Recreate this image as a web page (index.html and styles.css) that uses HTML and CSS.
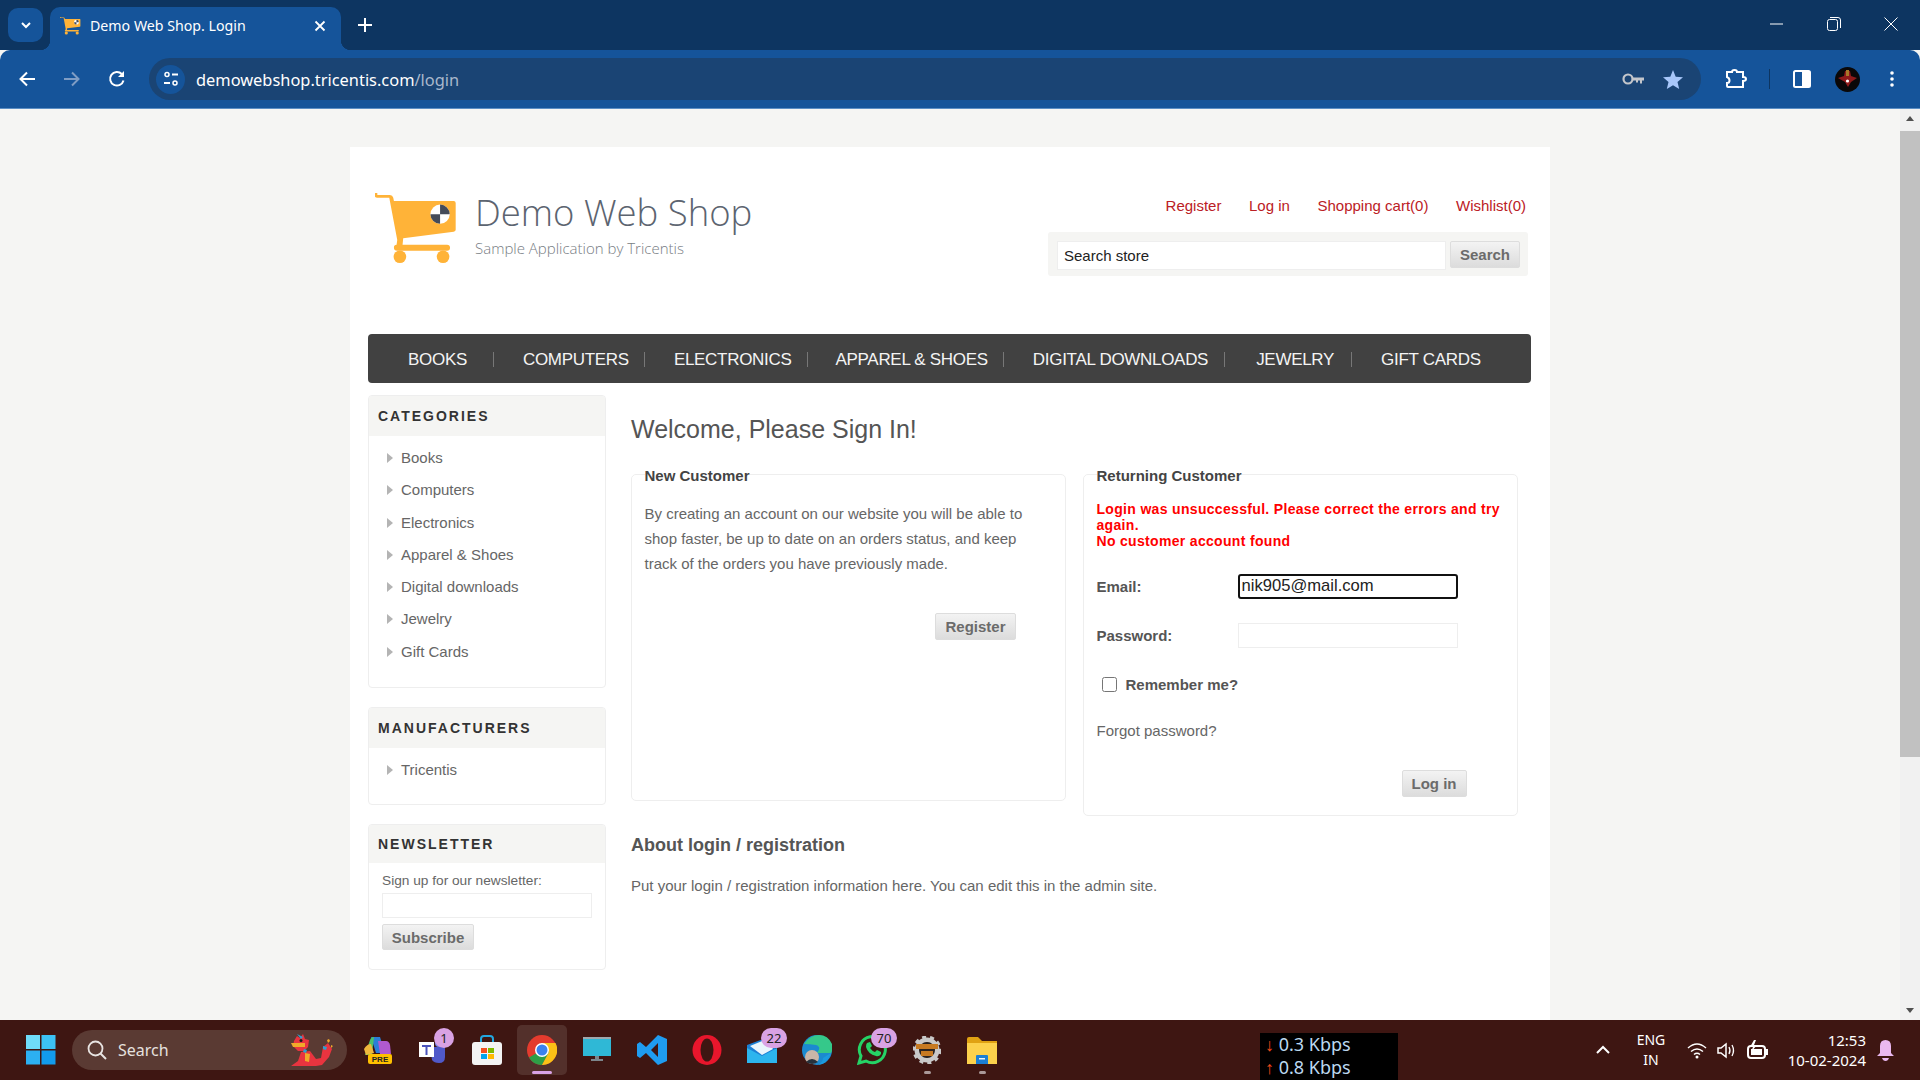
FILE: index.html
```html
<!DOCTYPE html>
<html lang="en">
<head>
    <meta charset="UTF-8">
    <title>Demo Web Shop. Login</title>
    <link rel="stylesheet" href="styles.css">
</head>
<body>
    <!-- Browser: tabs -->
    <div class="tabstrip">
        <div class="tab-search">
            <svg width="14" height="14" viewBox="0 0 14 14"><path d="M3 5l4 4 4-4" fill="none" stroke="#fff" stroke-width="2"/></svg>
        </div>
        <div class="tab">
            <svg width="21" height="18" viewBox="105 155 250 215"><path d="M112 160h38q8 0 10 8l2 10h180q6 0 6 6v81q0 5-6 6l-152 19-2 20h134a9 9 0 0 1 0 18H172q-10 0-10-10 0-8 8-8l2-14-24-128h-36a9 9 0 0 1 0-18z" fill="#ffb338"/><circle cx="180" cy="346" r="19" fill="#ffb338"/><circle cx="310" cy="346" r="19" fill="#ffb338"/><circle cx="301" cy="218" r="29" fill="#fff"/><path d="M301 189a29 29 0 0 1 29 29h-29zM301 247a29 29 0 0 1-29-29h29z" fill="#444b59"/></svg>
            <span class="tab-title">Demo Web Shop. Login</span>
            <svg class="tab-close" width="12" height="12" viewBox="0 0 12 12"><path d="M1.5 1.5l9 9M10.500 1.500l-9 9" stroke="#fff" stroke-width="1.800"/></svg>
        </div>
        <svg class="tab-new" width="14" height="14" viewBox="0 0 14 14"><path d="M7 0v14M0 7h14" stroke="#fff" stroke-width="2"/></svg>
        <div class="window-buttons">
            <svg width="14" height="14" viewBox="0 0 14 14"><path d="M0 7h13" stroke="#fff"/></svg>
            <svg width="14" height="14" viewBox="0 0 14 14"><rect x=".5" y="2.500" width="10" height="11" rx="2" fill="none" stroke="#fff"/><path d="M3 .5h8q2.500 0 2.500 2.500v8" fill="none" stroke="#fff"/></svg>
            <svg width="14" height="14" viewBox="0 0 14 14"><path d="M.5.5l13 13M13.500.5l-13 13" stroke="#fff"/></svg>
        </div>
    </div>

    <!-- Browser: toolbar -->
    <div class="toolbar">
        <svg class="nav-icon" width="18" height="18" viewBox="0 0 18 18"><path d="M17 9H3M9 2.500L2.500 9 9 15.500" fill="none" stroke="#fff" stroke-width="2"/></svg>
        <svg class="nav-icon" width="18" height="18" viewBox="0 0 18 18"><path d="M1 9h14M9 2.500L15.500 9 9 15.500" fill="none" stroke="#7f9dc4" stroke-width="2"/></svg>
        <svg class="nav-icon" width="18" height="18" viewBox="0 0 18 18"><path d="M15.500 10.500A6.800 6.800 0 1 1 13.800 4" fill="none" stroke="#fff" stroke-width="2"/><path d="M16 1v6h-6z" fill="#fff"/></svg>
        <div class="omnibox">
            <span class="site-icon">
                <svg width="16" height="16" viewBox="0 0 16 16"><circle cx="4" cy="3.500" r="2" fill="none" stroke="#fff" stroke-width="1.500"/><path d="M9 3.500h6M1 12h6" stroke="#fff" stroke-width="2"/><circle cx="12" cy="12" r="2" fill="none" stroke="#fff" stroke-width="1.500"/></svg>
            </span>
            <span class="url">demowebshop.tricentis.com<span class="url-path">/login</span></span>
            <svg class="omni-key" width="23" height="14" viewBox="0 0 23 14"><circle cx="6" cy="7" r="4.500" fill="none" stroke="#c3c6cb" stroke-width="2.200"/><path d="M11 5.500h11v3h-2v3h-2v-3h-2v2h-2v-2h-3z" fill="#c3c6cb"/></svg>
            <svg class="omni-star" width="20" height="19" viewBox="0 0 20 19"><path d="M10 0l2.700 6.700 7.300.6-5.500 4.700 1.700 7L10 15.200 3.800 19l1.700-7L0 7.300l7.300-.6z" fill="#a8c7fa"/></svg>
        </div>
        <svg class="tool-icon tool-puzzle" width="22" height="20" viewBox="0 0 22 20"><path d="M2 3h5q0-2 2.500-2T12 3h6v5q3 0 3 2t-3 2v6H3q-1 0-1-1v-3q2.500 0 2.500-2.500T2 8z" fill="none" stroke="#fff" stroke-width="2"/></svg>
        <span class="tool-sep"></span>
        <svg class="tool-icon tool-panel" width="18" height="18" viewBox="0 0 18 18"><rect x="1" y="1" width="16" height="16" rx="1.500" fill="#15549a" stroke="#fff" stroke-width="2"/><rect x="9" y="1" width="8" height="16" fill="#fff"/></svg>
        <svg class="tool-avatar" width="25" height="25" viewBox="0 0 25 25"><circle cx="12.500" cy="12.500" r="12.500" fill="#0a0808"/><path d="M3 11l6-2 1-5h5l1 5 6 2-6 4-3 5-3-5z" fill="#8f1a1a"/><rect x="11" y="3" width="3" height="6" fill="#a8782a"/><circle cx="12.500" cy="14" r="1.600" fill="#fff"/></svg>
        <svg class="tool-dots" width="4" height="16" viewBox="0 0 4 16"><circle cx="2" cy="2" r="1.800" fill="#fff"/><circle cx="2" cy="8" r="1.800" fill="#fff"/><circle cx="2" cy="14" r="1.800" fill="#fff"/></svg>
    </div>

    <!-- Page -->
    <div class="viewport">
        <div class="page-scroll">
            <div class="master-wrapper">
                <header class="shop-header">
                    <a class="logo" href="#">
                        <svg width="83" height="72" viewBox="105 155 250 215"><path d="M112 160h38q8 0 10 8l2 10h180q6 0 6 6v81q0 5-6 6l-152 19-2 20h134a9 9 0 0 1 0 18H172q-10 0-10-10 0-8 8-8l2-14-24-128h-36a9 9 0 0 1 0-18z" fill="#ffb338"/><circle cx="180" cy="346" r="19" fill="#ffb338"/><circle cx="310" cy="346" r="19" fill="#ffb338"/><circle cx="301" cy="218" r="29" fill="#fff"/><path d="M301 189a29 29 0 0 1 29 29h-29zM301 247a29 29 0 0 1-29-29h29z" fill="#444b59"/></svg>
                        <span class="logo-text">
                            <span class="logo-name">Demo Web Shop</span>
                            <span class="logo-sub">Sample Application by Tricentis</span>
                        </span>
                    </a>
                    <div class="header-right">
                        <ul class="header-links">
                            <li><a href="#">Register</a></li>
                            <li><a href="#">Log in</a></li>
                            <li><a href="#">Shopping cart(0)</a></li>
                            <li><a href="#">Wishlist(0)</a></li>
                        </ul>
                        <form class="search-box">
                            <input class="search-input" type="text" value="Search store">
                            <button class="btn search-btn" type="button">Search</button>
                        </form>
                    </div>
                </header>

                <ul class="top-menu">
                    <li><a href="#">BOOKS</a></li>
                    <li><a href="#">COMPUTERS</a></li>
                    <li><a href="#">ELECTRONICS</a></li>
                    <li><a href="#">APPAREL &amp; SHOES</a></li>
                    <li><a href="#">DIGITAL DOWNLOADS</a></li>
                    <li><a href="#">JEWELRY</a></li>
                    <li><a href="#">GIFT CARDS</a></li>
                </ul>

                <div class="columns">
                    <aside class="side">
                        <div class="block">
                            <div class="block-title">CATEGORIES</div>
                            <ul class="block-list block-list-long">
                                <li><a href="#">Books</a></li>
                                <li><a href="#">Computers</a></li>
                                <li><a href="#">Electronics</a></li>
                                <li><a href="#">Apparel &amp; Shoes</a></li>
                                <li><a href="#">Digital downloads</a></li>
                                <li><a href="#">Jewelry</a></li>
                                <li><a href="#">Gift Cards</a></li>
                            </ul>
                        </div>
                        <div class="block">
                            <div class="block-title">MANUFACTURERS</div>
                            <ul class="block-list">
                                <li><a href="#">Tricentis</a></li>
                            </ul>
                        </div>
                        <div class="block">
                            <div class="block-title block-title-short">NEWSLETTER</div>
                            <div class="newsletter">
                                <label class="newsletter-label" for="news-email">Sign up for our newsletter:</label>
                                <input class="text-input newsletter-input" id="news-email" type="text">
                                <button class="btn subscribe-btn" type="button">Subscribe</button>
                            </div>
                        </div>
                    </aside>

                    <main class="content">
                        <h1 class="page-title">Welcome, Please Sign In!</h1>
                        <div class="customer-boxes">
                            <fieldset class="box box-new">
                                <legend>New Customer</legend>
                                <p class="box-text">By creating an account on our website you will be able to shop faster, be up to date on an orders status, and keep track of the orders you have previously made.</p>
                                <div class="box-buttons box-buttons-new">
                                    <button class="btn" type="button">Register</button>
                                </div>
                            </fieldset>
                            <fieldset class="box box-returning">
                                <legend>Returning Customer</legend>
                                <div class="error-text">
                                    Login was unsuccessful. Please correct the errors and try again.<br>
                                    No customer account found
                                </div>
                                <div class="form-row form-row-email">
                                    <label for="email">Email:</label>
                                    <input class="text-input email-input" id="email" type="text" value="nik905@mail.com">
                                </div>
                                <div class="form-row form-row-password">
                                    <label for="password">Password:</label>
                                    <input class="text-input" id="password" type="password">
                                </div>
                                <div class="remember-row">
                                    <span class="checkbox"></span>
                                    <span class="remember-label">Remember me?</span>
                                </div>
                                <a class="forgot" href="#">Forgot password?</a>
                                <div class="box-buttons box-buttons-login">
                                    <button class="btn" type="button">Log in</button>
                                </div>
                            </fieldset>
                        </div>
                        <h2 class="about-title">About login / registration</h2>
                        <p class="about-text">Put your login / registration information here. You can edit this in the admin site.</p>
                    </main>
                </div>
            </div>
        </div>
        <div class="scrollbar">
            <svg width="20" height="20" viewBox="0 0 20 20"><path d="M6 12l4-5 4 5z" fill="#505050"/></svg>
            <div class="scroll-track"><div class="scroll-thumb"></div></div>
            <svg width="20" height="20" viewBox="0 0 20 20"><path d="M6 8l4 5 4-5z" fill="#505050"/></svg>
        </div>
    </div>

    <!-- Windows taskbar -->
    <div class="taskbar">
        <div class="win-start">
            <svg width="30" height="30" viewBox="0 0 30 30"><rect width="14" height="14" fill="#6fdcf9"/><rect x="15.500" width="14" height="14" fill="#3cc2f5"/><rect y="15.500" width="14" height="14" fill="#2cb0f2"/><rect x="15.500" y="15.500" width="14" height="14" fill="#129bec"/></svg>
        </div>
        <div class="win-search">
            <svg width="20" height="20" viewBox="0 0 20 20"><circle cx="8.500" cy="8.500" r="7" fill="none" stroke="#e8e4e2" stroke-width="1.800"/><path d="M13.500 13.500l5.500 5.500" stroke="#e8e4e2" stroke-width="2"/></svg>
            <span class="win-search-text">Search</span>
            <svg class="dragon" width="44" height="34" viewBox="0 0 44 34"><path d="M1 33l7-5 3-9 9-1 6 8 5-1 2-11 5-4 4 6-3 8-7 8-6 1H12z" fill="#e8343f"/><path d="M4 8l3-5 3 2 3-4 2 5 4 1-1 7-4 4H8L3 13z" fill="#e8343f"/><path d="M1 10h14v4H3zM15 20l5 1-1 8-4-1zM37 7l2-1 1 2-2 2zM41 12l2 1-2 2z" fill="#f0a92a"/><circle cx="11" cy="7.500" r="1.500" fill="#1b1b1b"/><path d="M7 1l6 3-2 2zM33 13l4 1-1 3-3-1zM14 16l3 1-1 3-3-1z" fill="#2f9fd0"/></svg>
        </div>

        <div class="task-icon">
            <svg width="30" height="30" viewBox="0 0 30 30"><path d="M9 2h9l5 16h-9z" fill="#2a7fd6"/><path d="M3 20L8 5q1-3 4-3l-2 18z" fill="#4cc06a"/><path d="M16 6h8q3 0 4 4l1 9H18z" fill="#b05ad0"/><path d="M2 14q3-5 7-5l3 9-8 2z" fill="#f0b83c"/><rect x="6" y="19" width="24" height="10" rx="2" fill="#ffc000"/><text class="pre-label" x="18" y="27" text-anchor="middle">PRE</text></svg>
        </div>
        <div class="task-icon">
            <svg width="30" height="30" viewBox="0 0 30 30"><circle cx="22" cy="8" r="4" fill="#7b83eb"/><path d="M13 12h15v10q0 6-6 6-5 0-7-3z" fill="#5059c9"/><rect x="2" y="7" width="15" height="15" fill="#fff"/><path d="M5 10h9v2h-3.500v8h-2v-8H5z" fill="#4b53bc"/></svg>
            <span class="badge">1</span>
        </div>
        <div class="task-icon">
            <svg width="30" height="30" viewBox="0 0 30 30"><path d="M9 7V4q0-3 3-3h6q3 0 3 3v3" fill="none" stroke="#22a7e0" stroke-width="2"/><rect x="0" y="7" width="30" height="23" rx="3" fill="#f3f3f3"/><rect x="9" y="13" width="6" height="5" fill="#f25022"/><rect x="16" y="13" width="6" height="5" fill="#7fba00"/><rect x="9" y="19" width="6" height="5" fill="#00a4ef"/><rect x="16" y="19" width="6" height="5" fill="#ffb900"/></svg>
        </div>
        <div class="task-icon task-icon-active">
            <svg width="30" height="30" viewBox="0 0 30 30"><circle cx="15" cy="15" r="15" fill="#e33b2e"/><path d="M15 15l-13 7.500A15 15 0 0 0 15 30l7.500-13z" fill="#2e9e47"/><path d="M15 8h13.500A15 15 0 0 1 15 30l7-13z" fill="#fbc116"/><circle cx="15" cy="15" r="7" fill="#fff"/><circle cx="15" cy="15" r="5.500" fill="#3b82ee"/></svg>
            <span class="task-mark task-mark-active"></span>
        </div>
        <div class="task-icon">
            <svg width="28" height="26" viewBox="0 0 28 26"><rect width="28" height="19" fill="#2fb8d6"/><rect width="28" height="2" fill="#9fa8ad"/><path d="M12 19h4v3h-4zM8 22h12v2H8z" fill="#7d868c"/></svg>
        </div>
        <div class="task-icon">
            <svg width="30" height="30" viewBox="0 0 30 30"><path d="M21 0l9 4v22l-9 4-12-12-6 5-3-2V9l3-2 6 5zm0 8l-7 7 7 7z" fill="#1f9cf0"/></svg>
        </div>
        <div class="task-icon">
            <svg width="30" height="30" viewBox="0 0 30 30"><ellipse cx="15" cy="15" rx="14.500" ry="15" fill="#e8162c"/><ellipse cx="15" cy="15" rx="6.500" ry="11.500" fill="#3e1612"/></svg>
        </div>
        <div class="task-icon">
            <svg width="30" height="26" viewBox="0 0 30 26"><path d="M0 8L22 0v8l8 4v14H0z" fill="#1b7fd4"/><path d="M0 11l15 8 15-8v15H0z" fill="#2cb5ee"/><path d="M3 9l17-7 6 10-11 6z" fill="#e9f5fc"/></svg>
            <span class="badge badge-wide">22</span>
        </div>
        <div class="task-icon">
            <svg width="30" height="30" viewBox="0 0 30 30"><circle cx="15" cy="15" r="15" fill="#1b8ad0"/><path d="M2 9Q8 0 17 0q9 0 13 9 1 6-1 9H15q5-6-1-8-6-1-12-1z" fill="#35c88a"/><path d="M29 18q-3 11-13 12 5-3 5-7z" fill="#1b9adf"/><circle cx="10" cy="22" r="7" fill="#c9b6a8"/><path d="M4 27q6-6 12 0-6 4-12 0z" fill="#26323d"/></svg>
        </div>
        <div class="task-icon">
            <svg width="30" height="30" viewBox="0 0 30 30"><path d="M2 28l2-7A13 13 0 1 1 9 26z" fill="none" stroke="#25d366" stroke-width="3"/><path d="M10 8l3-1 2 4-2 2q2 3 5 4l2-2 4 2v2q-2 3-5 2-8-2-10-9 0-3 1-4z" fill="#25d366"/></svg>
            <span class="badge badge-wide">70</span>
        </div>
        <div class="task-icon">
            <svg width="28" height="28" viewBox="0 0 28 28"><circle cx="14" cy="14" r="10" fill="none" stroke="#c9c9c9" stroke-width="5"/><circle cx="14" cy="14" r="13" fill="none" stroke="#c9c9c9" stroke-width="3" stroke-dasharray="4 4"/><circle cx="14" cy="14" r="8" fill="#2a2320"/><rect x="3" y="8" width="22" height="5" fill="#c77a22"/><rect x="8" y="15" width="12" height="5" fill="#c77a22"/></svg>
            <span class="task-mark"></span>
        </div>
        <div class="task-icon">
            <svg width="30" height="27" viewBox="0 0 30 27"><path d="M0 2q0-2 2-2h9l4 4h15v6H0z" fill="#e0a213"/><rect y="6" width="30" height="21" fill="#fcd14c"/><path d="M9 19q0-1 1-1h10q1 0 1 1v8H9z" fill="#1b7fd4"/><rect x="12" y="21" width="6" height="1.500" fill="#e8f2fb"/></svg>
            <span class="task-mark"></span>
        </div>

        <div class="net-meter">
            <div class="net-row"><span class="net-arrow">↓</span> 0.3 Kbps</div>
            <div class="net-row"><span class="net-arrow">↑</span> 0.8 Kbps</div>
        </div>

        <div class="tray">
            <svg class="tray-chevron" width="14" height="10" viewBox="0 0 14 10"><path d="M1 8l6-6 6 6" fill="none" stroke="#fff" stroke-width="2"/></svg>
            <div class="tray-lang">ENG<br>IN</div>
            <svg class="tray-wifi" width="20" height="17" viewBox="0 0 20 17"><path d="M1 6q9-8 18 0M4 9.500q6-5 12 0M7 12.500q3-2.500 6 0" fill="none" stroke="#fff" stroke-width="1.500"/><circle cx="10" cy="15" r="1.500" fill="#fff"/></svg>
            <svg class="tray-sound" width="20" height="17" viewBox="0 0 20 17"><path d="M1 6h3l5-4v13l-5-4H1z" fill="none" stroke="#fff" stroke-width="1.500"/><path d="M12 5q2 3.500 0 7M15 3q3 5.500 0 11" fill="none" stroke="#fff" stroke-width="1.300"/></svg>
            <svg class="tray-battery" width="22" height="20" viewBox="0 0 22 20"><rect x="1" y="6" width="17" height="12" rx="3" fill="none" stroke="#fff" stroke-width="2"/><rect x="19" y="9" width="2" height="6" fill="#fff"/><path d="M7 0L3 7h3l-2 5 6-7H7l2-5z" fill="#fff"/><rect x="4" y="9" width="11" height="6" fill="#fff"/></svg>
            <div class="tray-clock">12:53<br>10-02-2024</div>
            <svg class="tray-bell" width="17" height="21" viewBox="0 0 17 21"><path d="M8.500 0q5.500 0 5.500 6v7l3 3H0l3-3V6q0-6 5.500-6z" fill="#eab8f0"/><path d="M5 18h7q-1 3-3.500 3T5 18z" fill="#eab8f0"/></svg>
        </div>
    </div>
</body>
</html>
```

FILE: styles.css
```css
/* General */
* {
    box-sizing: border-box;
}

html, body {
    height: 100%;
}

body {
    margin: 0;
    height: 1080px;
    display: flex;
    flex-direction: column;
    overflow: hidden;
    font-family: "Liberation Sans", Arial, sans-serif;
    font-size: 15px;
    color: #666;
    background: #f5f5f3;
}

a {
    color: inherit;
    text-decoration: none;
}

ul {
    list-style: none;
    margin: 0;
    padding: 0;
}

/* Browser tabs */
.tabstrip {
    height: 50px;
    flex-shrink: 0;
    display: flex;
    align-items: flex-start;
    background: #0d3561;
    font-family: "Noto Sans", sans-serif;
    color: #fff;
}

.tab-search {
    width: 35px;
    height: 34px;
    margin: 8px 7px 0 8px;
    display: flex;
    align-items: center;
    justify-content: center;
    border-radius: 10px;
    background: #15549a;
}

.tab {
    position: relative;
    width: 291px;
    height: 43px;
    margin-top: 7px;
    padding: 0 15px 6px 10px;
    display: flex;
    align-items: center;
    border-radius: 10px 10px 0 0;
    background: #15549a;
}

.tab::before,
.tab::after {
    content: "";
    position: absolute;
    bottom: 0;
    width: 10px;
    height: 10px;
}

.tab::before {
    left: -10px;
    background: radial-gradient(circle at 0 0, #0d3561 10px, #15549a 10.5px);
}

.tab::after {
    right: -10px;
    background: radial-gradient(circle at 100% 0, #0d3561 10px, #15549a 10.5px);
}

.tab-title {
    flex: 1;
    margin-left: 9px;
    font-size: 14.2px;
}

.tab-new {
    margin: 18px 0 0 17px;
}

.window-buttons {
    margin-left: auto;
    margin-top: 17px;
    display: flex;
    gap: 43px;
    padding-right: 22px;
}

/* Browser toolbar */
.toolbar {
    height: 59px;
    flex-shrink: 0;
    display: flex;
    align-items: center;
    padding-left: 18px;
    border-radius: 10px 10px 0 0;
    border-bottom: 1px solid #5b8ec4;
    background: #15549a;
}

.nav-icon {
    margin-right: 27px;
}

.omnibox {
    width: 1552px;
    height: 42px;
    margin-left: -4px;
    padding: 0 18px 0 7px;
    display: flex;
    align-items: center;
    border-radius: 21px;
    background: #1a4474;
}

.site-icon {
    width: 29px;
    height: 29px;
    display: flex;
    align-items: center;
    justify-content: center;
    border-radius: 50%;
    background: #15549a;
}

.url {
    flex: 1;
    margin-left: 11px;
    font-family: "Noto Sans", sans-serif;
    font-size: 16.4px;
    color: #fff;
}

.url-path {
    color: #a9b8cc;
}

.omni-star {
    margin-left: 18px;
}

.tool-icon {
    margin-left: 24px;
}

.tool-sep {
    width: 1px;
    height: 20px;
    margin-left: 22px;
    background: #0d3561;
}

.tool-panel {
    margin-left: 23px;
}

.tool-avatar {
    margin-left: 24px;
}

.tool-dots {
    margin-left: 30px;
}

/* Page area */
.viewport {
    flex: 1;
    min-height: 0;
    display: flex;
    overflow: hidden;
}

.page-scroll {
    flex: 1;
    padding-top: 38px;
    overflow: hidden;
}

.master-wrapper {
    width: 1200px;
    min-height: 1000px;
    margin: 0 auto;
    padding: 0 19px 0 18px;
    background: #fff;
}

.scrollbar {
    width: 20px;
    display: flex;
    flex-direction: column;
    background: #f1f1f1;
}

.scroll-track {
    flex: 1;
    padding-top: 2px;
}

.scroll-thumb {
    height: 626px;
    background: #c1c1c1;
}

/* Shop header */
.shop-header {
    height: 187px;
    display: flex;
    justify-content: space-between;
}

.logo {
    margin: 46px 0 0 7px;
    display: flex;
    align-items: flex-start;
    height: 72px;
    gap: 17px;
}

.logo-text {
    display: flex;
    flex-direction: column;
}

.logo-name {
    margin-top: -6px;
    font-family: "Open Sans", sans-serif;
    font-weight: 300;
    font-size: 36.5px;
    line-height: 50px;
    color: #5c6470;
}

.logo-sub {
    margin-top: 1px;
    font-family: "Open Sans", sans-serif;
    font-weight: 300;
    font-size: 15px;
    line-height: 20px;
    color: #777c83;
}

.header-right {
    display: flex;
    flex-direction: column;
    align-items: flex-end;
    padding-top: 50px;
}

.header-links {
    display: flex;
    gap: 27.6px;
    padding-right: 5px;
    line-height: 18px;
    color: #bb2025;
}

.search-box {
    width: 480px;
    height: 44px;
    margin: 17px 3px 0 0;
    padding: 9px 8px 0 9px;
    display: flex;
    align-items: flex-start;
    gap: 4px;
    border-radius: 3px;
    background: #f5f5f3;
}

.search-input {
    width: 389px;
    height: 29px;
    padding: 0 6px;
    border: 1px solid #eee;
    background: #fff;
    font-family: "Liberation Sans", sans-serif;
    font-size: 15px;
    color: #222;
}

.btn {
    height: 27px;
    padding: 0 9px;
    border: 1px solid #ddd;
    border-radius: 2px;
    background: linear-gradient(#f3f3f3, #dcdcdc);
    font-family: "Liberation Sans", sans-serif;
    font-size: 15px;
    font-weight: bold;
    color: #6b6b6b;
}

.search-btn {
    width: 70px;
    padding: 0;
}

/* Main menu */
.top-menu {
    height: 49px;
    padding: 2px 0 0 11px;
    display: flex;
    align-items: center;
    border-radius: 4px;
    background: #414141;
    font-size: 17px;
    letter-spacing: -.3px;
    color: #f4f4f4;
}

.top-menu li {
    padding: 0 15px 0 29px;
    border-right: 1px solid #777;
    line-height: 15px;
}

.top-menu li:first-child {
    padding-right: 26px;
}

.top-menu li:nth-child(4) {
    padding-left: 28px;
}

.top-menu li:nth-child(5) {
    padding-right: 16px;
}

.top-menu li:nth-child(6) {
    padding: 0 17px 0 31px;
}

.top-menu li:last-child {
    padding-left: 29px;
    border-right: none;
}

/* Columns */
.columns {
    display: flex;
    gap: 25px;
    padding-top: 12px;
}

.side {
    width: 238px;
    flex-shrink: 0;
}

.block {
    margin-bottom: 19px;
    border: 1px solid #eee;
    border-radius: 4px;
    overflow: hidden;
}

.block-title {
    height: 40px;
    padding-left: 9px;
    background: #f5f5f3;
    font-size: 14px;
    font-weight: bold;
    line-height: 41px;
    letter-spacing: 2px;
    color: #333;
}

.block-title-short {
    height: 38px;
    line-height: 38px;
}

.block-list {
    padding: 6px 0 18px;
}

.block-list-long {
    padding-bottom: 19px;
}

.block-list li {
    position: relative;
    height: 32.3px;
    padding-left: 32px;
    line-height: 32px;
}

.block-list li::before {
    content: "";
    position: absolute;
    left: 18px;
    top: 11px;
    border-left: 6px solid #b4b4b4;
    border-top: 5px solid transparent;
    border-bottom: 5px solid transparent;
}

.newsletter {
    padding: 9px 13px 19px;
}

.newsletter-label {
    display: block;
    font-size: 13.7px;
    line-height: 18px;
    color: #666;
}

.text-input {
    width: 220px;
    height: 25px;
    padding: 0 3px;
    border: 1px solid #eee;
    background: #fff;
    font-family: "Liberation Sans", sans-serif;
}

.newsletter-input {
    display: block;
    width: 210px;
    margin-top: 3px;
}

.subscribe-btn {
    display: block;
    width: 92px;
    height: 26px;
    margin-top: 6px;
    padding: 0;
}

/* Content */
.content {
    flex: 1;
}

.page-title {
    margin: 0;
    padding-top: 19px;
    font-size: 25px;
    font-weight: normal;
    line-height: 30px;
    color: #555;
}

.customer-boxes {
    margin-top: 19px;
    display: flex;
    align-items: flex-start;
    gap: 17px;
}

.box {
    width: 435px;
    margin: 0;
    padding: 0 12.5px;
    border: 1px solid #eee;
    border-radius: 5px;
}

.box legend {
    padding: 4px 0 0;
    font-size: 15px;
    font-weight: bold;
    line-height: 18px;
    color: #444;
}

.box-new {
    height: 338px;
}

.box-returning {
    height: 353px;
}

.box-text {
    margin: 16px 0 0;
    line-height: 25px;
}

.box-buttons {
    display: flex;
    justify-content: flex-end;
}

.box-buttons-new {
    margin: 37px 37px 0 0;
}

.box-buttons-login {
    margin: 30px 38px 0 0;
}

.box-buttons .btn {
    min-width: 64px;
}

.error-text {
    margin-top: 16px;
    font-size: 14px;
    font-weight: bold;
    line-height: 16px;
    letter-spacing: .32px;
    color: #f00;
}

.form-row {
    display: flex;
    align-items: center;
    font-weight: bold;
    color: #555;
}

.form-row label {
    width: 141px;
}

.form-row-email {
    margin-top: 25px;
}

.form-row-password {
    margin-top: 24px;
}

.email-input {
    border: 2px solid #111;
    border-radius: 3px;
    padding: 0 2px 1px;
    font-size: 16.6px;
    color: #222;
}

.remember-row {
    margin: 28px 0 0 5px;
    display: flex;
    align-items: center;
    gap: 9px;
    font-weight: bold;
    color: #555;
}

.checkbox {
    width: 15px;
    height: 15px;
    border: 1px solid #767676;
    border-radius: 2.500px;
    background: #fff;
}

.forgot {
    display: block;
    margin-top: 29px;
    line-height: 18px;
}

.about-title {
    margin: 18px 0 0;
    font-size: 18px;
    line-height: 22px;
    color: #555;
}

.about-text {
    margin: 21px 0 0;
    line-height: 18px;
}

/* Windows taskbar */
.taskbar {
    height: 60px;
    flex-shrink: 0;
    display: flex;
    align-items: center;
    padding-left: 13px;
    background: #3e1612;
    font-family: "Noto Sans", sans-serif;
    color: #fff;
}

.win-start {
    width: 55px;
    display: flex;
    justify-content: center;
}

.win-search {
    width: 275px;
    height: 40px;
    margin: 0 2px 0 4px;
    padding: 0 13px 0 15px;
    display: flex;
    align-items: center;
    border-radius: 20px;
    background: #5a3a33;
}

.win-search-text {
    flex: 1;
    margin-left: 11px;
    font-size: 16px;
    color: #e6e1df;
}

.task-icon {
    position: relative;
    width: 55px;
    height: 50px;
    display: flex;
    align-items: center;
    justify-content: center;
}

.task-icon-active {
    width: 50px;
    margin: 0 2.5px;
    border-radius: 5px;
    background: #53302b;
}

.pre-label {
    font-family: "Liberation Sans", sans-serif;
    font-size: 8px;
    font-weight: bold;
    fill: #222;
}

.badge {
    position: absolute;
    top: 3px;
    right: 5px;
    min-width: 20px;
    height: 20px;
    border-radius: 10px;
    background: #d9a2e4;
    font-size: 13px;
    line-height: 20px;
    text-align: center;
    color: #222;
}

.badge-wide {
    right: 2px;
    width: 26px;
}

.task-mark {
    position: absolute;
    left: 50%;
    bottom: 1px;
    width: 7px;
    height: 3px;
    margin-left: -3px;
    border-radius: 2px;
    background: #a99;
}

.task-mark-active {
    width: 20px;
    margin-left: -10px;
    background: #d9a2e4;
}

.net-meter {
    width: 138px;
    height: 47px;
    margin-left: 251px;
    padding: 0 0 0 5px;
    align-self: flex-end;
    background: #000;
    font-size: 18px;
    line-height: 23px;
    color: #bcd8f0;
}

.net-row {
    white-space: nowrap;
}

.net-arrow {
    font-weight: bold;
    color: #f04a1a;
}

.tray {
    margin-left: auto;
    height: 100%;
    display: flex;
    align-items: center;
}

.tray-lang {
    width: 60px;
    margin-left: 11px;
    font-size: 14px;
    line-height: 20px;
    text-align: center;
}

.tray-wifi {
    margin-left: 6px;
}

.tray-sound {
    margin-left: 10px;
}

.tray-battery {
    margin-left: 10px;
}

.tray-clock {
    width: 97px;
    font-size: 15px;
    line-height: 20px;
    text-align: right;
}

.tray-bell {
    margin: 0 26px 0 11px;
}
```
